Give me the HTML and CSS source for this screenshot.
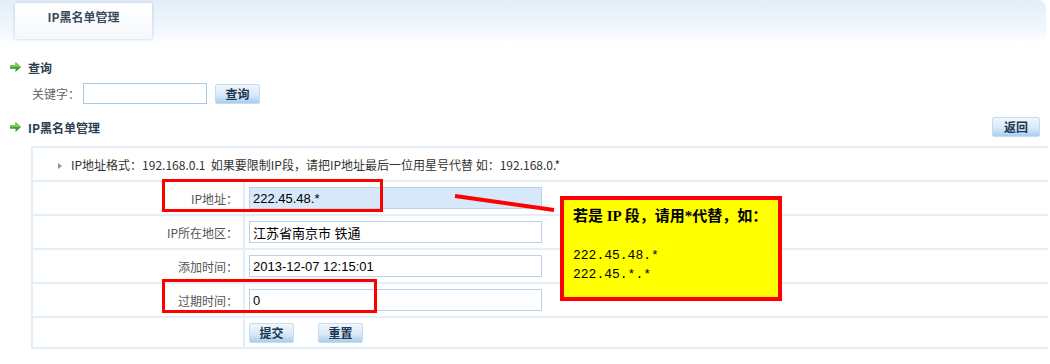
FILE: index.html
```html
<!DOCTYPE html>
<html lang="zh-CN">
<head>
<meta charset="utf-8">
<title>IP黑名单管理</title>
<link rel="stylesheet" href="styles.css">
</head>
<body>
<div class="topbar">
  <div class="tab">IP黑名单管理</div>
</div>

<div class="section-title">
  <svg class="arrow" width="11" height="10" viewBox="0 0 11 10"><path d="M0 3.2h5.5V0L11 5 5.5 10V6.8H0z" fill="#3f9f2c"/><path d="M0 3.2h5.5V0L11 5H0z" fill="#7cc95e"/></svg>
  <span>查询</span>
</div>
<div class="search-row">
  <span class="kw-label">关键字：</span>
  <input class="kw-input" type="text">
  <button class="btn">查询</button>
</div>

<div class="section-bar">
  <div class="section-title inline">
    <svg class="arrow" width="11" height="10" viewBox="0 0 11 10"><path d="M0 3.2h5.5V0L11 5 5.5 10V6.8H0z" fill="#3f9f2c"/><path d="M0 3.2h5.5V0L11 5H0z" fill="#7cc95e"/></svg>
    <span>IP黑名单管理</span>
  </div>
  <button class="btn">返回</button>
</div>

<div class="table-wrap">
  <table class="form-table">
    <tr class="hint-row">
      <td colspan="2"><span class="tri"></span>IP地址格式：192.168.0.1&nbsp;&nbsp;如果要限制IP段，请把IP地址最后一位用星号代替 如：192.168.0.*</td>
    </tr>
    <tr>
      <td class="label">IP地址：</td>
      <td class="value"><input class="field field-hl" type="text" value="222.45.48.*"></td>
    </tr>
    <tr>
      <td class="label">IP所在地区：</td>
      <td class="value"><input class="field" type="text" value="江苏省南京市 铁通"></td>
    </tr>
    <tr>
      <td class="label">添加时间：</td>
      <td class="value"><input class="field" type="text" value="2013-12-07 12:15:01"></td>
    </tr>
    <tr>
      <td class="label">过期时间：</td>
      <td class="value"><input class="field" type="text" value="0"></td>
    </tr>
    <tr class="btn-row">
      <td class="label"></td>
      <td class="value"><button class="btn">提交</button><button class="btn">重置</button></td>
    </tr>
  </table>

  <div class="mark mark-ip"></div>
  <div class="mark mark-exp"></div>
  <svg class="pointer" width="110" height="24" viewBox="0 0 110 24"><line x1="2" y1="3" x2="101" y2="17" stroke="#ff0000" stroke-width="4"/></svg>
  <div class="note">
    <div class="note-title">若是 IP 段，请用*代替，如：</div>
    <div class="note-code">222.45.48.*<br>222.45.*.*</div>
  </div>
</div>
</body>
</html>
```

FILE: styles.css
```css
* { box-sizing: border-box; }

body {
  margin: 0;
  font-family: "Noto Sans CJK SC", "Liberation Sans", sans-serif;
  font-size: 12px;
  color: #333;
  background: #fff;
}

.topbar {
  height: 42px;
  padding-left: 15px;
  margin-right: 4px;
  background: linear-gradient(#e3eef9, #f6f9fd 85%, #fdfeff);
  border-top-right-radius: 8px;
  display: flex;
  align-items: flex-start;
}

.tab {
  margin-top: 3px;
  width: 137px;
  height: 36px;
  line-height: 28px;
  text-align: center;
  font-weight: bold;
  color: #3a4a5c;
  background: linear-gradient(#ffffff, #f5f8fc);
  box-shadow: 0 0 3px rgba(140, 165, 195, 0.55);
}

.section-title {
  display: flex;
  align-items: center;
  gap: 7px;
  height: 20px;
  margin-top: 15px;
  padding-left: 10px;
  font-weight: bold;
  color: #2c3e50;
}

.section-title.inline {
  margin-top: 0;
}

.arrow { flex: none; }

.search-row {
  display: flex;
  align-items: center;
  height: 21px;
  margin-top: 6px;
  padding-left: 32px;
}

.kw-label {
  width: 51px;
  color: #666;
}

.kw-input {
  width: 124px;
  height: 21px;
  border: 1px solid #a9c9e8;
  margin: 0 8px 0 0;
  padding: 0 3px;
  background: #fff;
}

.btn {
  width: 45px;
  height: 20px;
  padding: 0;
  border: 1px solid #c8dcef;
  border-radius: 2px;
  background: linear-gradient(#f0f6fc, #d9e9f8 55%, #a9cdef);
  font-family: "Noto Sans CJK SC", sans-serif;
  font-size: 12px;
  font-weight: bold;
  color: #1c3550;
  line-height: 18px;
}

.section-bar {
  display: flex;
  align-items: center;
  justify-content: space-between;
  height: 20px;
  margin-top: 13px;
  padding-right: 10px;
}

.section-bar .btn { width: 48px; }

.table-wrap {
  position: relative;
  margin: 9px 2px 0 31px;
}

.form-table {
  width: 100%;
  border-collapse: collapse;
  border: 2px solid #e3eef9;
  border-right: none;
}

.form-table td {
  border-top: 2px solid #e3eef9;
  border-bottom: 2px solid #e3eef9;
  padding: 0;
}

.hint-row td {
  height: 35px;
  padding-left: 25px;
  color: #333;
}

.tri {
  display: inline-block;
  width: 0;
  height: 0;
  border-top: 3px solid transparent;
  border-bottom: 3px solid transparent;
  border-left: 4px solid #8a96a6;
  margin-right: 9px;
  vertical-align: 1px;
}

.form-table tr td { height: 34px; }
.form-table tr.btn-row td { height: 31px; }

.label {
  width: 212px;
  text-align: right;
  padding-right: 5px !important;
  color: #555;
  border-right: 2px solid #e3eef9;
}

.value {
  padding-left: 4px !important;
}

.field {
  display: block;
  width: 293px;
  height: 22px;
  border: 1px solid #b9d1e9;
  padding: 0 3px;
  font-family: "Liberation Sans", "Noto Sans CJK SC", sans-serif;
  font-size: 13px;
  color: #000;
  background: #fff;
}

.field-hl {
  background: #d6e8f9;
}

.btn-row .btn + .btn { margin-left: 24px; }

.mark {
  position: absolute;
  border: 3px solid #ff0000;
}

.mark-ip {
  left: 131px;
  top: 33px;
  width: 221px;
  height: 33px;
}

.mark-exp {
  left: 131px;
  top: 133px;
  width: 215px;
  height: 34px;
}

.pointer {
  position: absolute;
  left: 422px;
  top: 47px;
}

.note {
  position: absolute;
  left: 529px;
  top: 50px;
  width: 222px;
  height: 105px;
  border: 4px solid #ff0000;
  background: #ffff00;
  padding: 4px 0 0 9px;
  color: #000;
}

.note-title {
  font-family: "Liberation Serif", "Noto Sans CJK SC", serif;
  font-size: 15px;
  font-weight: bold;
  line-height: 24px;
}

.note-code {
  margin-top: 18px;
  font-family: "Liberation Mono", monospace;
  font-size: 13px;
  line-height: 19px;
}
```
